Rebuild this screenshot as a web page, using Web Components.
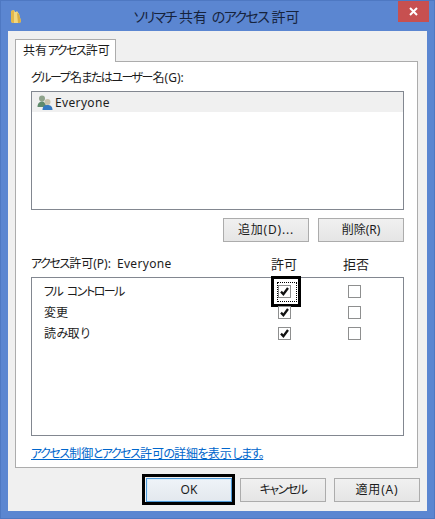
<!DOCTYPE html>
<html lang="ja">
<head>
<meta charset="utf-8">
<title>アクセス許可</title>
<style>
html, body { margin: 0; padding: 0; }
body {
    width: 435px;
    height: 519px;
    overflow: hidden;
    font-family: "Noto Sans", "Noto Sans CJK JP", sans-serif;
    font-size: 12px;
    color: #1c1c1c;
    font-feature-settings: "palt";
}
.title-run { --tight: -1.6px; --tight-edge: -1.8px; }
</style>
</head>
<body>

<template id="tpl-window">
    <style>
        :host {
            display: grid;
            grid-template-rows: 29px 1fr;
            box-sizing: border-box;
            width: 435px;
            height: 519px;
            padding: 1px 7px 7px;
            background: #5b86d1;
            border: 1px solid #4e78c2;
        }
        .bar { display: flex; align-items: flex-start; position: relative; }
        .icon { display: block; margin: 7px 0 0 2px; }
        .title {
            position: absolute;
            left: 0;
            right: 0;
            top: 5px;
            text-align: center;
            font-size: 14px;
            line-height: 20px;
            color: #16233c;
            white-space: nowrap;
            word-spacing: 3px;
        }
        .close {
            position: absolute;
            right: -2px;
            top: -1px;
            width: 31px;
            height: 21px;
            background: #c75050;
            display: flex;
            align-items: center;
            justify-content: center;
        }
        .client {
            background: #f0f0f0;
            padding: 8px 9px 0 7px;
            display: flex;
            flex-direction: column;
        }
    </style>
    <div class="bar">
        <svg class="icon" width="12" height="15" viewBox="0 0 12 15">
            <path d="M1 2 L4 1 L5 3 L6 3 L7 2 L9 5 L11 12 L10 14 L3 14 L1 13 Z" fill="#f2d77e"/>
            <path d="M1 2 L4 1 L4 14 L3 14 L1 13 Z" fill="#e3b84c"/>
            <path d="M7 4 L9 5 L11 12 L10 14 L8 14 Z" fill="#d8ad45"/>
        </svg>
        <div class="title"><slot name="title"></slot></div>
        <div class="close">
            <svg width="11" height="9" viewBox="0 0 11 9">
                <path d="M2 1 L9 8 M9 1 L2 8" stroke="#fff" stroke-width="2" fill="none"/>
            </svg>
        </div>
    </div>
    <div class="client"><slot></slot></div>
</template>

<template id="tpl-tabs">
    <style>
        :host { display: block; }
        .tab {
            box-sizing: border-box;
            width: 101px;
            height: 23px;
            margin-bottom: -1px;
            position: relative;
            z-index: 1;
            background: #fff;
            border: 1px solid #acacac;
            border-bottom: 0;
            padding: 1px 0 0 7px;
            line-height: 19px;
            white-space: nowrap;
        }
        .panel {
            box-sizing: border-box;
            height: 407px;
            background: #fff;
            border: 1px solid #acacac;
            padding: 7px 13px 0 15px;
        }
    </style>
    <div class="tab"><slot name="tab"></slot></div>
    <div class="panel"><slot></slot></div>
</template>

<template id="tpl-list">
    <style>
        :host {
            display: block;
            box-sizing: border-box;
            background: #fff;
            border: 1px solid #828790;
        }
    </style>
    <slot></slot>
</template>

<template id="tpl-button">
    <style>
        :host {
            display: flex;
            align-items: center;
            justify-content: center;
            box-sizing: border-box;
            width: 86px;
            height: 24px;
            background: linear-gradient(#f0f0f0, #e5e5e5);
            border: 1px solid #acacac;
            position: relative;
            line-height: 20px;
            white-space: nowrap;
        }
        :host([default]) {
            border-color: #4f9ad8;
            background: linear-gradient(#eef3f8, #e3e8ee);
            box-shadow: inset 0 0 0 1px #d8ecfa;
        }
        :host([default])::after {
            content: "";
            position: absolute;
            left: -5px;
            right: -4px;
            top: -5px;
            bottom: -4px;
            border: 3px solid #000;
        }
    </style>
    <slot></slot>
</template>

<template id="tpl-check">
    <style>
        :host {
            display: block;
            box-sizing: border-box;
            width: 13px;
            height: 13px;
            background: #fff;
            border: 1px solid #8e8f8f;
            position: relative;
        }
        svg { display: none; position: absolute; left: 0; top: 0; }
        :host([checked]) svg { display: block; }
        :host([focused])::before {
            content: "";
            position: absolute;
            left: -2px;
            top: -4px;
            width: 18px;
            height: 18px;
            border: 1px dotted #000;
        }
        :host([focused])::after {
            content: "";
            position: absolute;
            left: -8px;
            top: -10px;
            width: 24px;
            height: 25px;
            border: 3px solid #000;
        }
    </style>
    <svg width="11" height="11" viewBox="0 0 11 11">
        <path d="M2 5.6 L4.4 8.2 L9 2" stroke="#111" stroke-width="2.3" fill="none"/>
    </svg>
</template>

<template id="tpl-row">
    <style>
        :host {
            display: grid;
            grid-template-columns: 246px 70px 13px;
            height: 21px;
            align-items: center;
        }
        .name { padding-left: 12px; line-height: 18px; white-space: nowrap; }
    </style>
    <div class="name"><slot></slot></div>
    <slot name="allow"></slot>
    <slot name="deny"></slot>
</template>

<template id="tpl-tight">
    <style>
        :host {
            display: inline;
            letter-spacing: var(--tight, -1.5px);
            margin-left: var(--tight-left, var(--tight-edge, -1px));
            margin-right: var(--tight-edge, -1px);
        }
    </style>
    <slot></slot>
</template>

<template id="tpl-content">
    <style>
        :host { display: block; }
        .label { line-height: 18px; height: 18px; white-space: nowrap; }
        .users { margin-top: 4px; height: 119px; }
        .buttons { display: flex; justify-content: flex-end; gap: 9px; margin: 8px 0 0; }
        .head {
            display: grid;
            grid-template-columns: 240px 72px 26px;
            margin-top: 13px;
            height: 18px;
            line-height: 18px;
            white-space: nowrap;
        }
        .col { display: block; width: 26px; text-align: center; font-size: 13px; }
        .who { margin-left: 6px; letter-spacing: .35px; }
        .perms { margin-top: 4px; height: 159px; padding-top: 3px; }
        .link {
            margin-top: 9px;
            line-height: 18px;
            color: #0066cc;
            text-decoration: underline;
            white-space: nowrap;
        }
        .selected {
            display: flex;
            align-items: center;
            gap: 2px;
            height: 20px;
            padding-left: 5px;
            background: #f0f0f0;
            letter-spacing: .35px;
        }
        .wide { letter-spacing: .8px; }
        .first { --tight-left: 0px; }
        .hira { --tight-left: -2.2px; }
    </style>
    <div class="label"><tight-text class="first">グループ</tight-text>名<tight-text class="hira">またはユーザー</tight-text>名(G):</div>
    <win-list class="users">
        <div class="selected">
            <svg width="16" height="15" viewBox="0 0 16 15">
                <circle cx="5" cy="3.5" r="3" fill="#8fa38c"/>
                <path d="M0.5 12 C0.5 8 3 6.5 5 6.5 C7 6.5 9 8 9 12 Z" fill="#5f8a6c"/>
                <circle cx="10.5" cy="7" r="3" fill="#c9c2ad"/>
                <path d="M5.5 15 C5.5 11 8 10 10.5 10 C13 10 15.5 11 15.5 15 Z" fill="#3579c2"/>
            </svg>
            <span>Everyone</span>
        </div>
    </win-list>
    <div class="buttons">
        <win-button class="wide">追加(D)...</win-button>
        <win-button>削除(R)</win-button>
    </div>
    <div class="head">
        <div><tight-text class="first">アクセス</tight-text>許可(P):<span class="who">Everyone</span></div>
        <span class="col">許可</span>
        <span class="col">拒否</span>
    </div>
    <win-list class="perms">
        <perm-row><tight-text class="first" style="word-spacing:3px">フル コントロール</tight-text><win-check slot="allow" checked focused></win-check><win-check slot="deny"></win-check></perm-row>
        <perm-row>変更<win-check slot="allow" checked></win-check><win-check slot="deny"></win-check></perm-row>
        <perm-row>読<tight-text>み</tight-text>取<tight-text>り</tight-text><win-check slot="allow" checked></win-check><win-check slot="deny"></win-check></perm-row>
    </win-list>
    <div class="link"><tight-text class="first">アクセス</tight-text>制御<tight-text class="hira">とアクセス</tight-text>許可<tight-text class="hira">の</tight-text>詳細<tight-text class="hira">を</tight-text>表示<tight-text>します。</tight-text></div>
</template>

<template id="tpl-actions">
    <style>
        :host {
            display: flex;
            justify-content: flex-end;
            gap: 8px;
            margin: 10px -2px 0 0;
        }
        win-button:first-child { margin-right: 1px; }
        .wide { letter-spacing: .8px; }
    </style>
    <win-button default>OK</win-button>
    <win-button><tight-text style="--tight-edge:0px">キャンセル</tight-text></win-button>
    <win-button class="wide">適用(A)</win-button>
</template>

<win-window>
    <span slot="title"><tight-text class="title-run">ソリマチ</tight-text>共有 <tight-text class="title-run">のアクセス</tight-text>許可</span>
    <win-tabs>
        <span slot="tab">共有<tight-text>アクセス</tight-text>許可</span>
        <sharing-content></sharing-content>
    </win-tabs>
    <dialog-actions></dialog-actions>
</win-window>

<script>
// every element just stamps its template into an open shadow root
function defineFromTemplate(name, tplId) {
    customElements.define(name, class extends HTMLElement {
        constructor() {
            super();
            const root = this.attachShadow({mode: "open"});
            root.appendChild(document.getElementById(tplId).content.cloneNode(true));
        }
    });
}

defineFromTemplate("win-window", "tpl-window");
defineFromTemplate("win-tabs", "tpl-tabs");
defineFromTemplate("win-list", "tpl-list");
defineFromTemplate("win-button", "tpl-button");
defineFromTemplate("win-check", "tpl-check");
defineFromTemplate("perm-row", "tpl-row");
defineFromTemplate("tight-text", "tpl-tight");
defineFromTemplate("sharing-content", "tpl-content");
defineFromTemplate("dialog-actions", "tpl-actions");
</script>
</body>
</html>
